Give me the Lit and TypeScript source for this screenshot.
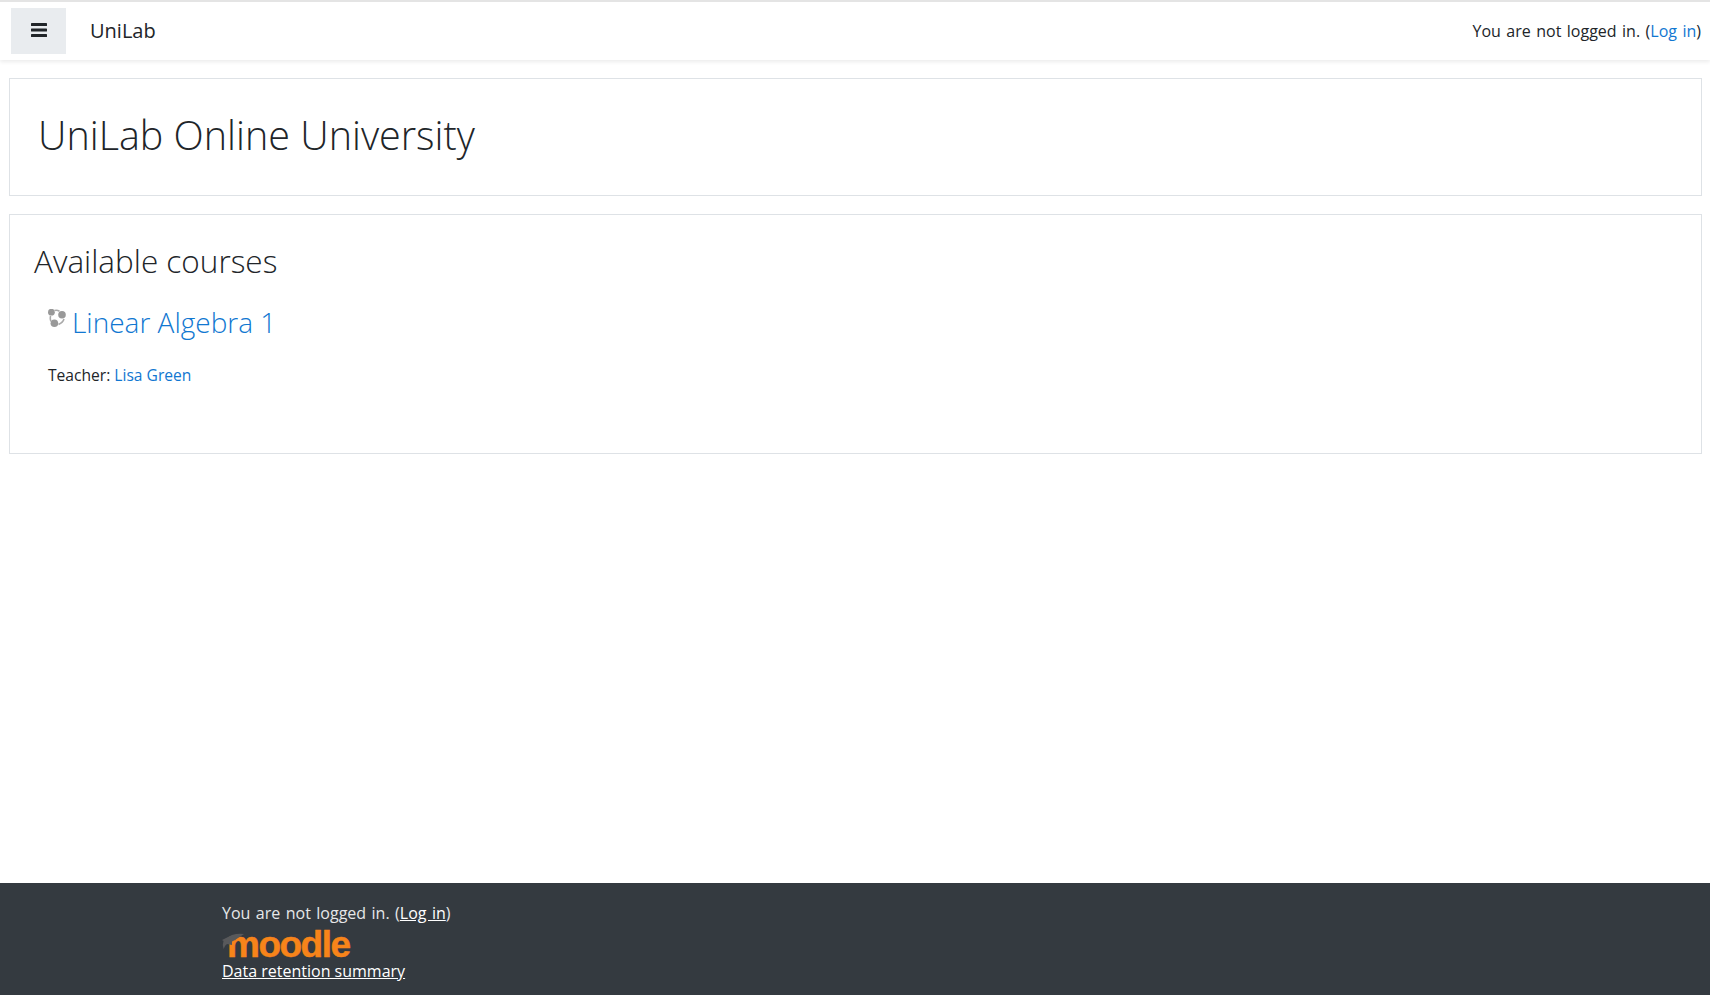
import { LitElement, html, css } from "lit";
import { customElement } from "lit/decorators.js";

@customElement("app-root")
export class AppRoot extends LitElement {
  static styles = css`
    :host {
      display: flex;
      flex-direction: column;
      min-height: 995px;
      font-family: "Open Sans", "Noto Sans", sans-serif;
      font-size: 16px;
      line-height: 1.5;
      color: #212529;
      background: #fff;
      box-sizing: border-box;
    }
    a { color: #1177d1; text-decoration: none; }
    .nav {
      height: 60px;
      box-sizing: border-box;
      border-top: 2px solid #e4e4e4;
      display: flex;
      align-items: center;
      padding: 0 9px 0 11px;
      box-shadow: 0 2px 4px rgba(0, 0, 0, 0.08);
    }
    .burger {
      width: 55px;
      height: 46px;
      background: #e9ecef;
      display: flex;
      align-items: center;
      justify-content: center;
    }
    .burger svg { margin-top: -2px; }
    .brand { margin-left: 24px; font-size: 20px; }
    .status { word-spacing: 1.3px; }
    .login { margin-left: auto; }
    main {
      flex: 1;
      padding: 18px 8px 0 9px;
      display: flex;
      flex-direction: column;
      gap: 18px;
    }
    .card { border: 1px solid #dee2e6; box-sizing: border-box; }
    .head { height: 118px; padding: 26px 28px; }
    h1 { margin: 0; font-weight: 300; font-size: 39.5px; line-height: 60px; }
    .courses { height: 240px; padding: 26px 24px; }
    h2 { margin: 0; font-weight: 300; font-size: 31.5px; line-height: 40px; }
    .course { display: flex; align-items: center; gap: 6px; margin: 20px 0 0 14px; }
    .course a { font-size: 28px; font-weight: 300; line-height: 42px; }
    .course svg { margin-top: -8px; }
    .teacher { margin: 21px 0 0 14px; font-size: 15.6px; }
    footer {
      height: 112px;
      box-sizing: border-box;
      background: #343a40;
      color: #e6e7e8;
      padding: 19px 0 0 222px;
      display: flex;
      flex-direction: column;
      align-items: flex-start;
    }
    footer a { color: #fff; text-decoration: underline; }
    footer div { line-height: 22px; }
    .logo { position: relative; height: 36px; }
    .logo svg { position: absolute; left: 0; top: 8px; z-index: 1; }
    .logo span {
      display: block;
      margin: 0 0 0 5px;
      color: #f7841a;
      font-family: "Liberation Sans", sans-serif;
      font-weight: 700;
      font-size: 37px;
      letter-spacing: -1.5px;
      line-height: 42px;
      -webkit-text-stroke: 0.5px #f7841a;
    }
  `;

  render() {
    return html`
      <div class="nav">
        <div class="burger">
          <svg width="16" height="14" viewBox="0 0 16 14">
            <rect y="0" width="16" height="3" rx="0.6" fill="#212529"></rect>
            <rect y="5.5" width="16" height="3" rx="0.6" fill="#212529"></rect>
            <rect y="11" width="16" height="3" rx="0.6" fill="#212529"></rect>
          </svg>
        </div>
        <span class="brand">UniLab</span>
        <span class="login status">You are not logged in. (<a href="#">Log in</a>)</span>
      </div>
      <main>
        <section class="card head"><h1>UniLab Online University</h1></section>
        <section class="card courses">
          <h2>Available courses</h2>
          <div class="course">
            <svg width="18" height="18" viewBox="0 0 18 18">
              <path d="M6.5 1.6 Q9 0.8 11.5 2.2 M16 10 Q15 13.5 10.5 15.5 M2.6 7 Q1.8 10 3 12.5" stroke="#aaa" stroke-width="1.6" fill="none"></path>
              <circle cx="3.4" cy="3.2" r="3.4" fill="#999"></circle>
              <circle cx="14" cy="5.8" r="3.8" fill="#999"></circle>
              <circle cx="6.4" cy="14.2" r="3.8" fill="#999"></circle>
            </svg>
            <a href="#">Linear Algebra 1</a>
          </div>
          <div class="teacher">Teacher: <a href="#">Lisa Green</a></div>
        </section>
      </main>
      <footer>
        <div class="status">You are not logged in. (<a href="#">Log in</a>)</div>
        <div class="logo">
          <svg width="30" height="30" viewBox="0 0 30 30">
            <path d="M0 8 L10 3 Q16 1 22 2 L13 8 L10 9.5 L10 13 L5 12 Q3 13 1.6 17 Q0 13 1.5 9 Z" fill="#58595b"></path>
          </svg>
          <span>moodle</span>
        </div>
        <div><a href="#">Data retention summary</a></div>
      </footer>
    `;
  }
}
